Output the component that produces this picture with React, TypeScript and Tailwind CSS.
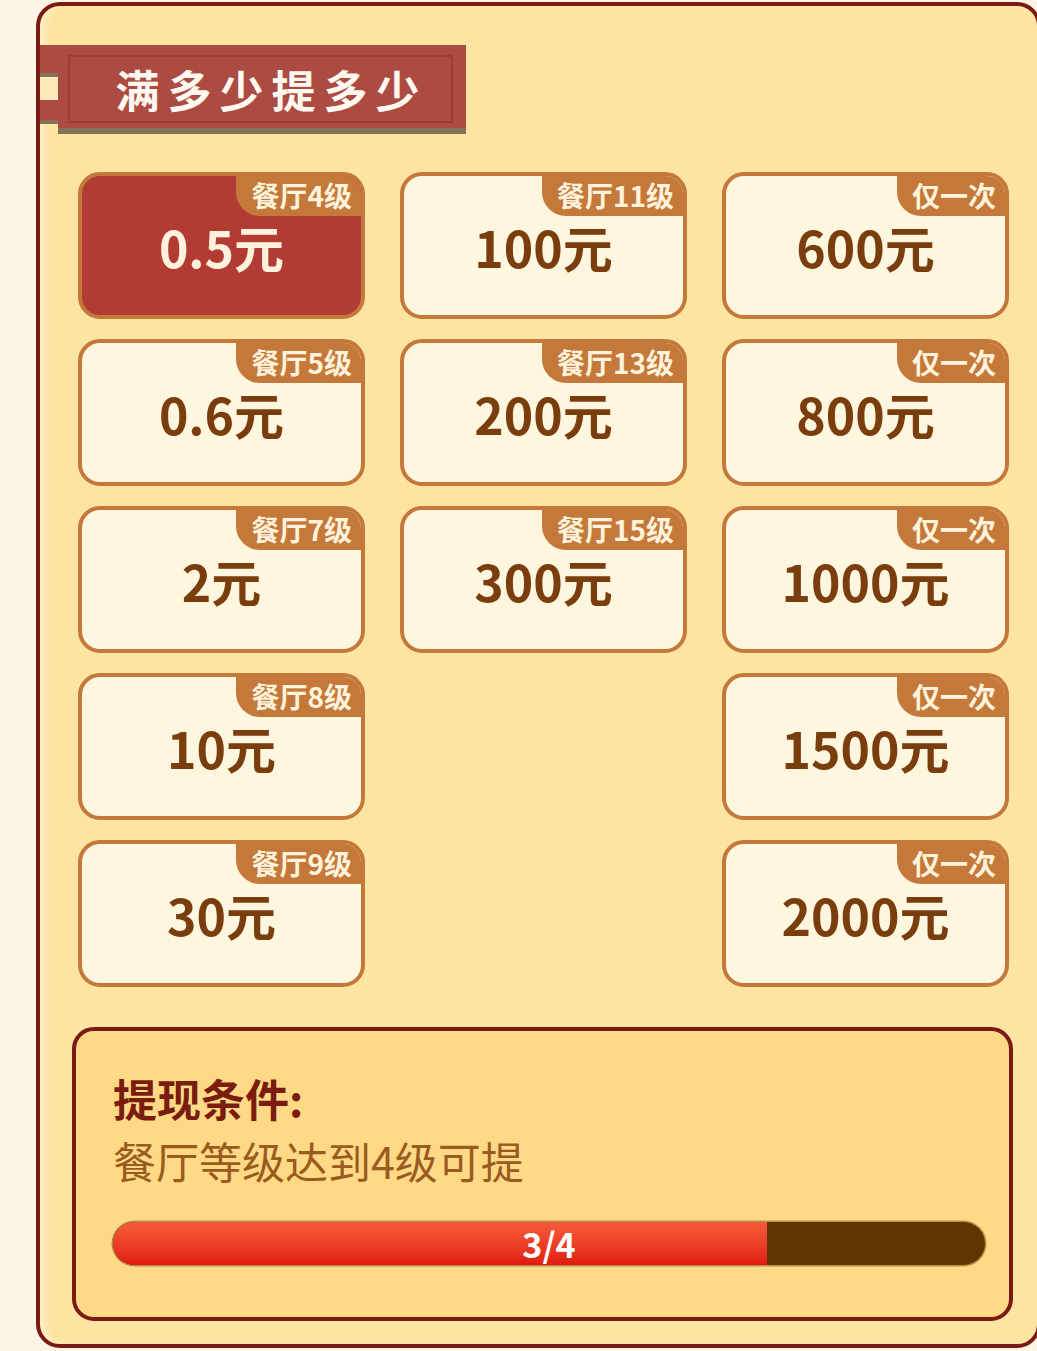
import React from "react";

type Tier = { tag: string; amount: string; active?: boolean };

const left: Tier[] = [
  { tag: "餐厅4级", amount: "0.5元", active: true },
  { tag: "餐厅5级", amount: "0.6元" },
  { tag: "餐厅7级", amount: "2元" },
  { tag: "餐厅8级", amount: "10元" },
  { tag: "餐厅9级", amount: "30元" },
];
const middle: Tier[] = [
  { tag: "餐厅11级", amount: "100元" },
  { tag: "餐厅13级", amount: "200元" },
  { tag: "餐厅15级", amount: "300元" },
];
const right: Tier[] = [
  { tag: "仅一次", amount: "600元" },
  { tag: "仅一次", amount: "800元" },
  { tag: "仅一次", amount: "1000元" },
  { tag: "仅一次", amount: "1500元" },
  { tag: "仅一次", amount: "2000元" },
];

function TierCard({ tier }: { tier: Tier }) {
  return (
    <div
      className={`relative h-[147px] w-[287px] overflow-hidden rounded-[22px] border-4 border-[#c4793a] ${
        tier.active ? "bg-[#b23c33]" : "bg-[#fff6df]"
      }`}
    >
      <div className="absolute right-0 top-0 flex h-[40px] items-center rounded-bl-[24px] bg-[#c4793a] pb-[3px] pl-[15px] pr-[9px] text-[28px] font-bold leading-none text-[#fff3dc]">
        {tier.tag}
      </div>
      <div
        className={`flex h-full items-center justify-center text-[50px] font-bold leading-none ${
          tier.active ? "text-[#fff1dc]" : "text-[#7a3d0d]"
        }`}
      >
        {tier.amount}
      </div>
    </div>
  );
}

function Column({ items }: { items: Tier[] }) {
  return (
    <div className="flex w-[287px] flex-col gap-[20px]">
      {items.map((t, i) => (
        <TierCard key={i} tier={t} />
      ))}
    </div>
  );
}

export default function App() {
  return (
    <div className="h-[1351px] w-[1037px] overflow-hidden bg-[#fdf5e3] pl-[36px] pt-[2px] font-['Noto_Sans_CJK_SC','Noto_Sans',sans-serif]">
      <div className="h-[1346px] w-[1005px] rounded-[24px] border-4 border-[#7b1a15] bg-[#fee4a2] pt-[39px] shadow-[inset_8px_0_8px_-4px_rgba(255,248,220,0.7)]">
        {/* title banner */}
        <div className="flex">
          <div className="flex w-[18px] flex-col">
            <div className="h-[28px] bg-[#ab4b41]" />
            <div className="h-[4px] bg-[#857358]" />
            <div className="h-[23px] bg-[#feeab8]" />
            <div className="h-[20px] bg-[#ab4b41]" />
            <div className="h-[4px] bg-[#857358]" />
          </div>
          <div className="flex flex-col">
            <div className="flex h-[83px] w-[408px] bg-[#ab4b41] pb-[5px] pl-[10px] pr-[13px] pt-[10px]">
              <div className="flex flex-1 items-center justify-center border-2 border-[#9b3d34] pl-[22px] text-[44px] font-bold leading-none tracking-[8px] text-[#fff8f0]">
                满多少提多少
              </div>
            </div>
            <div className="h-[6px] w-[408px] bg-[#857358]" />
          </div>
        </div>

        {/* tiers */}
        <div className="ml-[38px] mt-[38px] flex gap-[35px]">
          <Column items={left} />
          <Column items={middle} />
          <Column items={right} />
        </div>

        {/* condition box */}
        <div className="ml-[32px] mt-[40px] h-[294px] w-[941px] rounded-[22px] border-4 border-[#7a1a14] bg-[#ffd986] pl-[37px] pt-[41px]">
          <div className="text-[44px] font-bold leading-[52px] text-[#7a1d10]">提现条件:</div>
          <div className="mt-[10px] text-[43px] leading-[52px] text-[#9a5b1e]">餐厅等级达到4级可提</div>
          <div className="relative mt-[36px] flex h-[43px] w-[872px] rounded-full bg-[#623400] shadow-[0_0_0_1.5px_rgba(140,90,30,0.6)]">
            <div className="h-full w-[75%] rounded-l-full bg-gradient-to-b from-[#f75b3a] to-[#e0180f]" />
            <div className="absolute inset-0 flex items-center justify-center text-[34px] font-bold leading-[43px] text-white">
              3/4
            </div>
          </div>
        </div>
      </div>
    </div>
  );
}
